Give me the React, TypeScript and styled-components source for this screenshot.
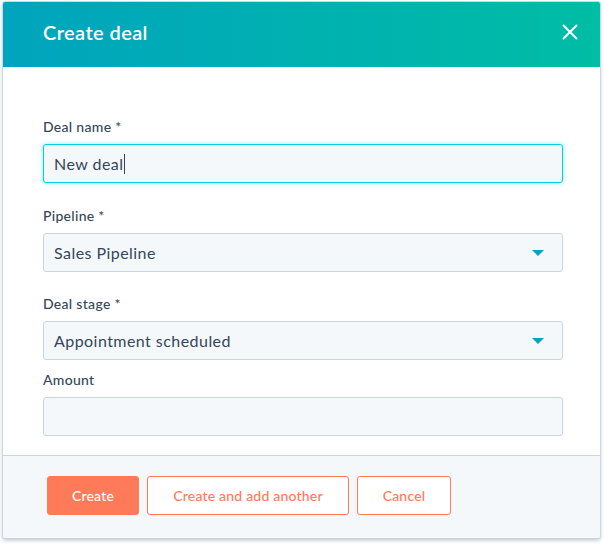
import React from 'react';
import styled, { createGlobalStyle } from 'styled-components';

const GlobalStyle = createGlobalStyle`
  html, body {
    margin: 0;
    padding: 0;
    background: #ffffff;
  }
  body {
    font-family: Lato, "Noto Sans", "Liberation Sans", sans-serif;
    color: #33475b;
  }
`;

const Page = styled.div`
  padding: 2px 4px 6px 3px;
`;

const Modal = styled.div`
  width: 597px;
  background: #ffffff;
  border-radius: 2px;
  box-shadow: 0 0 0 1px rgba(203, 214, 226, 0.9), 0 2px 4px rgba(45, 62, 80, 0.35);
  overflow: hidden;
`;

const Header = styled.div`
  height: 65px;
  box-sizing: border-box;
  display: flex;
  align-items: center;
  justify-content: space-between;
  padding: 0 20px 6px 40px;
  background: linear-gradient(to right, #00a4bd, #00bda5);
`;

const Title = styled.h3`
  margin: 0;
  font-size: 20px;
  font-weight: 600;
  color: #ffffff;
  letter-spacing: 0.4px;
`;

const CloseButton = styled.button`
  width: 20px;
  height: 20px;
  padding: 0;
  border: none;
  background: none;
  display: flex;
  align-items: center;
  justify-content: center;
  cursor: pointer;
`;

const Body = styled.div`
  display: flex;
  flex-direction: column;
  padding: 50px 37px 19px 40px;
`;

const Field = styled.div<{ $gap?: number }>`
  display: flex;
  flex-direction: column;
  margin-top: ${({ $gap }) => ($gap ?? 0)}px;
`;

const Label = styled.label`
  font-size: 14px;
  line-height: 20px;
  font-weight: 500;
  letter-spacing: 0.3px;
  color: #33475b;
  margin-bottom: 7px;
`;

const Box = styled.div<{ $focused?: boolean }>`
  height: 39px;
  box-sizing: border-box;
  display: flex;
  align-items: center;
  justify-content: space-between;
  padding: 0 18px 0 10px;
  font-size: 16px;
  letter-spacing: 0.45px;
  color: #33475b;
  background: #f5f8fa;
  border: 1px solid ${({ $focused }) => ($focused ? '#00d0e4' : '#cbd6e2')};
  border-radius: 3px;
  box-shadow: ${({ $focused }) => ($focused ? '0 0 4px 1px rgba(0, 208, 228, 0.3)' : 'none')};
`;

const Caret = styled.span`
  display: inline-block;
  width: 1px;
  height: 20px;
  margin-left: 1px;
  vertical-align: -4px;
  background: #33475b;
`;

const Arrow = styled.span`
  width: 0;
  height: 0;
  border-left: 6px solid transparent;
  border-right: 6px solid transparent;
  border-top: 6px solid #00a4bd;
`;

const Footer = styled.div`
  display: flex;
  gap: 8px;
  padding: 20px 0 23px 44px;
  background: #f5f8fa;
  border-top: 1px solid #cbd6e2;
`;

const Button = styled.button<{ $primary?: boolean; $width: number }>`
  width: ${({ $width }) => $width}px;
  height: 39px;
  font-family: inherit;
  font-size: 14px;
  font-weight: 500;
  letter-spacing: 0.2px;
  border-radius: 3px;
  border: 1px solid #ff7a59;
  background: ${({ $primary }) => ($primary ? '#ff7a59' : '#ffffff')};
  color: ${({ $primary }) => ($primary ? '#ffffff' : '#ff7a59')};
  cursor: pointer;
`;

const CloseIcon = () => (
  <svg width="16" height="16" viewBox="0 0 16 16">
    <path d="M1.5 1.5 L14.5 14.5 M14.5 1.5 L1.5 14.5" stroke="#ffffff" strokeWidth="2" strokeLinecap="round" />
  </svg>
);

export default function App() {
  return (
    <Page>
      <GlobalStyle />
      <Modal>
        <Header>
          <Title>Create deal</Title>
          <CloseButton aria-label="Close">
            <CloseIcon />
          </CloseButton>
        </Header>
        <Body>
          <Field>
            <Label>Deal name *</Label>
            <Box $focused>
              <span>
                New deal
                <Caret />
              </span>
            </Box>
          </Field>
          <Field $gap={23}>
            <Label>Pipeline *</Label>
            <Box>
              <span>Sales Pipeline</span>
              <Arrow />
            </Box>
          </Field>
          <Field $gap={22}>
            <Label>Deal stage *</Label>
            <Box>
              <span>Appointment scheduled</span>
              <Arrow />
            </Box>
          </Field>
          <Field $gap={10}>
            <Label>Amount</Label>
            <Box />
          </Field>
        </Body>
        <Footer>
          <Button $primary $width={92}>Create</Button>
          <Button $width={202}>Create and add another</Button>
          <Button $width={94}>Cancel</Button>
        </Footer>
      </Modal>
    </Page>
  );
}
